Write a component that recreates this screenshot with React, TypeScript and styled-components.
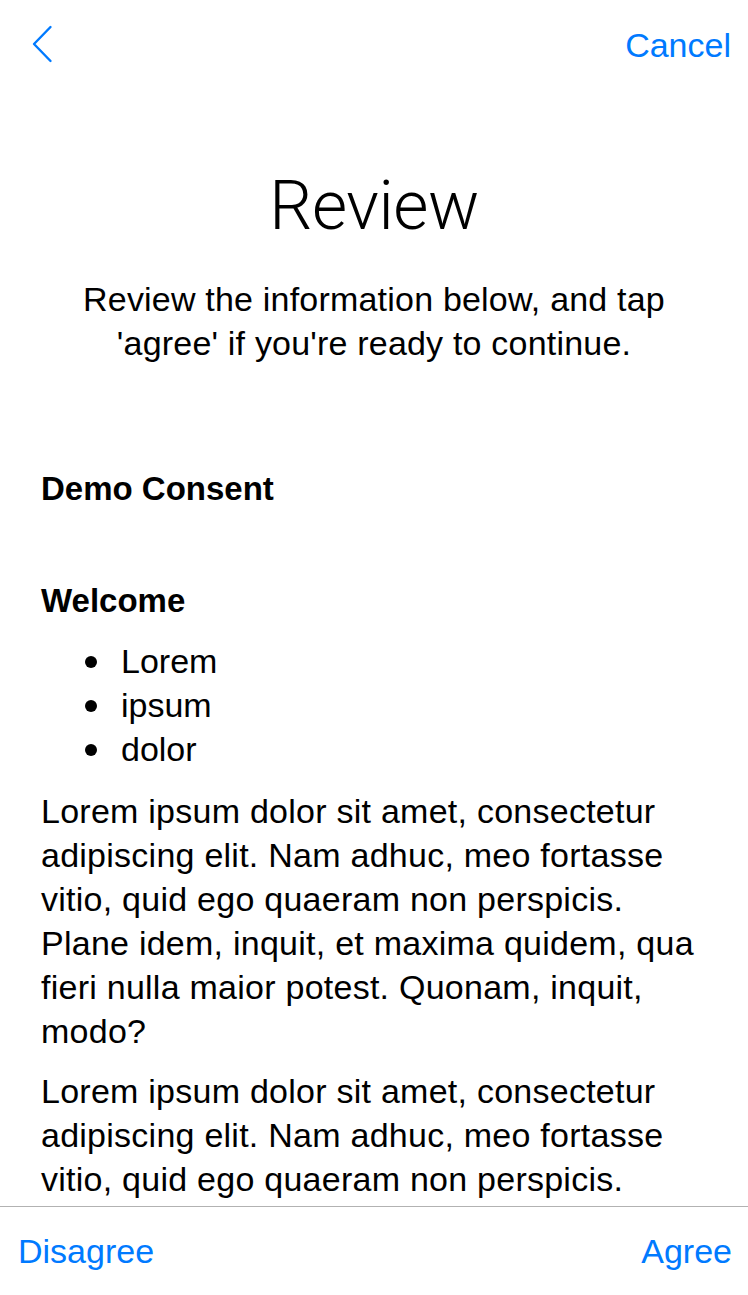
import styled, { createGlobalStyle } from 'styled-components';

const GlobalStyle = createGlobalStyle`
  * { box-sizing: border-box; }
  html, body { margin: 0; padding: 0; background: #ffffff; }
  body {
    font-family: "Liberation Sans", Arial, sans-serif;
    color: #000000;
    -webkit-font-smoothing: antialiased;
  }
`;

const Screen = styled.div`
  display: flex;
  flex-direction: column;
  width: 100%;
  height: 100vh;
  overflow: hidden;
  background: #ffffff;
`;

const NavBar = styled.div`
  display: flex;
  align-items: center;
  justify-content: space-between;
  height: 88px;
  padding: 1px 17px 0 22px;
  flex-shrink: 0;
`;

const BackButton = styled.button`
  display: flex;
  align-items: center;
  justify-content: center;
  width: 40px;
  height: 44px;
  padding: 0;
  margin-top: -2px;
  border: none;
  background: transparent;
  cursor: pointer;
`;

const BarButton = styled.button`
  border: none;
  background: transparent;
  padding: 0;
  font-family: "Liberation Sans", Arial, sans-serif;
  font-size: 34px;
  line-height: 44px;
  color: #007aff;
  cursor: pointer;
`;

const Scroll = styled.div`
  flex: 1;
  overflow: hidden;
  padding: 0 41px;
`;

const Title = styled.h1`
  margin: 78px 0 0;
  text-align: center;
  font-family: Roboto, "Liberation Sans", sans-serif;
  font-weight: 300;
  font-size: 68px;
  line-height: 80px;
  letter-spacing: -0.5px;
`;

const Subtitle = styled.p`
  margin: 31px 0 0;
  text-align: center;
  font-size: 34px;
  line-height: 44px;
  letter-spacing: 0.2px;
`;

const Heading = styled.h2<{ $gap: number }>`
  margin: ${p => p.$gap}px 0 0;
  font-size: 33px;
  line-height: 44px;
  font-weight: 700;
`;

const List = styled.ul`
  list-style: none;
  margin: 16px 0 0;
  padding: 0 0 0 80px;
`;

const Item = styled.li`
  position: relative;
  font-size: 34px;
  line-height: 44px;

  &::before {
    content: '';
    position: absolute;
    left: -36px;
    top: 17px;
    width: 12px;
    height: 12px;
    border-radius: 50%;
    background: #000000;
  }
`;

const Paragraph = styled.p<{ $gap: number }>`
  margin: ${p => p.$gap}px 0 0;
  font-size: 34px;
  line-height: 44px;
  letter-spacing: 0.25px;
`;

const Toolbar = styled.div`
  display: flex;
  align-items: center;
  justify-content: space-between;
  height: 89px;
  flex-shrink: 0;
  padding: 0 16px 0 18px;
  border-top: 1px solid #b2b2b2;
`;

const lorem =
  'Lorem ipsum dolor sit amet, consectetur adipiscing elit. Nam adhuc, meo fortasse vitio, quid ego quaeram non perspicis. Plane idem, inquit, et maxima quidem, qua fieri nulla maior potest. Quonam, inquit, modo?';

const ChevronLeft = () => (
  <svg width="22" height="38" viewBox="0 0 22 38" fill="none">
    <path d="M19.5 2 L3 19 L19.5 36" stroke="#007aff" strokeWidth="2.4" strokeLinecap="round" strokeLinejoin="round" />
  </svg>
);

export default function App() {
  return (
    <>
      <GlobalStyle />
      <Screen>
        <NavBar>
          <BackButton aria-label="Back">
            <ChevronLeft />
          </BackButton>
          <BarButton>Cancel</BarButton>
        </NavBar>

        <Scroll>
          <Title>Review</Title>
          <Subtitle>Review the information below, and tap 'agree' if you're ready to continue.</Subtitle>

          <Heading $gap={102}>Demo Consent</Heading>
          <Heading $gap={68}>Welcome</Heading>
          <List>
            <Item>Lorem</Item>
            <Item>ipsum</Item>
            <Item>dolor</Item>
          </List>
          <Paragraph $gap={18}>{lorem}</Paragraph>
          <Paragraph $gap={16}>{lorem}</Paragraph>
        </Scroll>

        <Toolbar>
          <BarButton>Disagree</BarButton>
          <BarButton>Agree</BarButton>
        </Toolbar>
      </Screen>
    </>
  );
}
